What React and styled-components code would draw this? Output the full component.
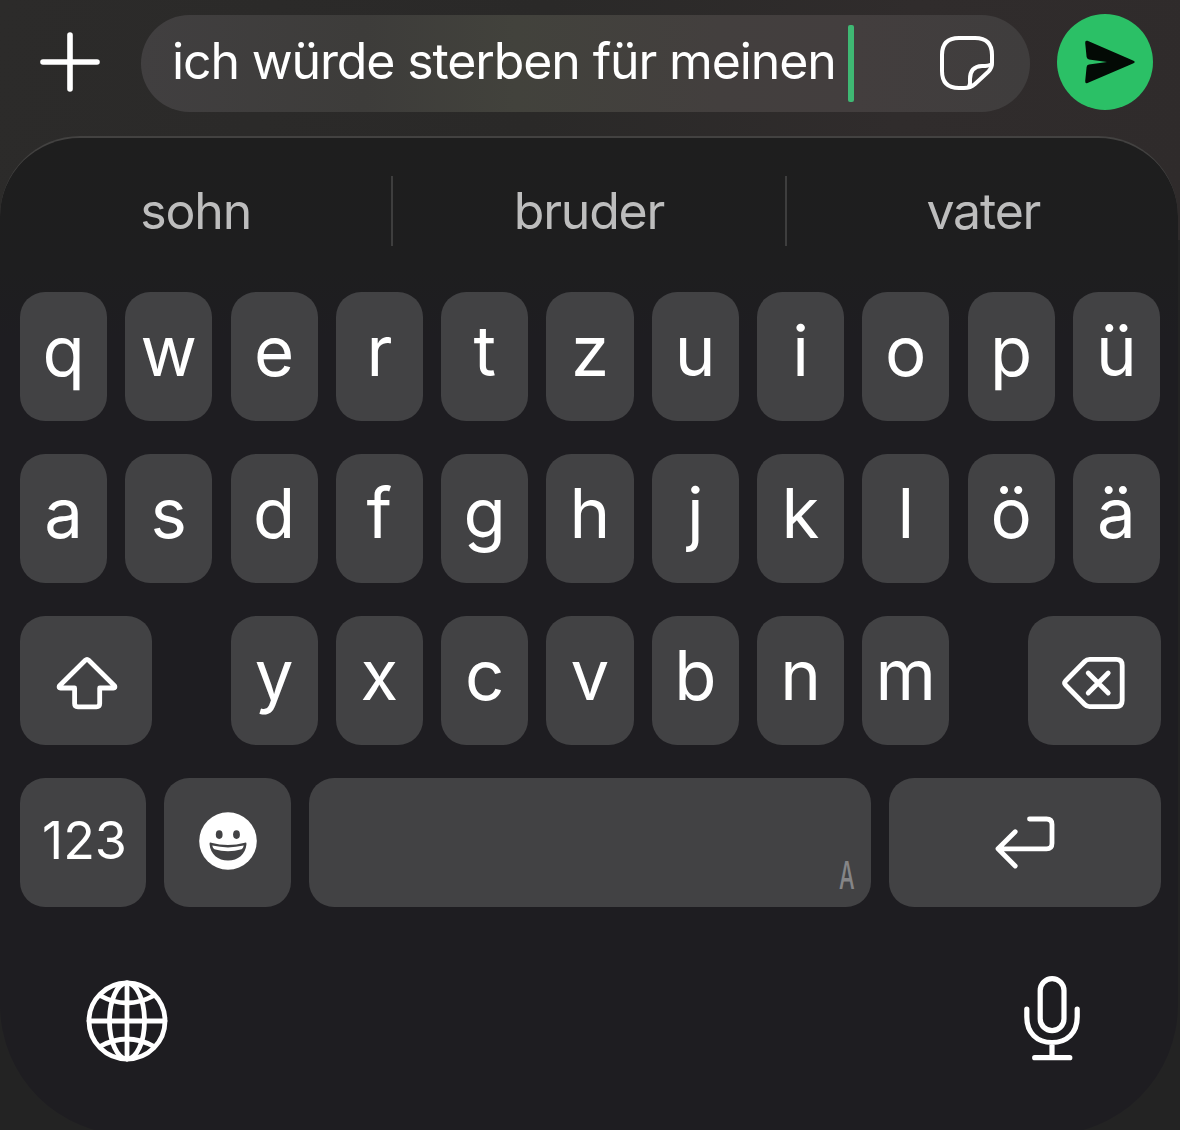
import React from "react";
import styled, { createGlobalStyle } from "styled-components";

const GlobalStyle = createGlobalStyle`
  * {
    box-sizing: border-box;
  }

  body {
    margin: 0;
    background: #262625;
    font-family: Inter, "Liberation Sans", sans-serif;
    color: #fff;
  }

  button {
    padding: 0;
    border: 0;
    font: inherit;
    color: inherit;
  }
`;

const Screen = styled.main`
  display: flex;
  flex-direction: column;
  width: 1180px;
  height: 1130px;
  overflow: hidden;
  background: linear-gradient(100deg, #2c2b2a 0%, #2a2928 45%, #302c2c 75%, #2f2b2b 100%) top / 100% 240px no-repeat
    #232323;
`;

const Composer = styled.header`
  display: flex;
  align-items: center;
  flex: none;
  height: 136px;
  padding: 0 27px 12px 36px;
`;

const IconButton = styled.button`
  display: flex;
  align-items: center;
  justify-content: center;
  flex: none;
  width: ${(props) => props.$size}px;
  height: ${(props) => props.$size}px;
  border-radius: 50%;
  background: ${(props) => props.$color || "transparent"};
`;

const MessageField = styled.div`
  display: flex;
  align-items: center;
  flex: none;
  width: 889px;
  height: 97px;
  margin: 3px 27px 0 37px;
  padding: 0 33px 0 31px;
  border-radius: 49px;
  background: linear-gradient(90deg, #413f40 0%, #3d3c3a 25%, #42423c 42%, #433f3e 65%, #433e3e 80%, #3f3d3d 100%);
`;

const MessageText = styled.span`
  margin-bottom: 5px;
  font-size: 50px;
  line-height: 60px;
  letter-spacing: -1.13px;
  white-space: pre;
`;

const Caret = styled.span`
  width: 6px;
  height: 77px;
  margin-left: 12px;
  border-radius: 2px;
  background: #3fb873;
`;

const StickerButton = styled(IconButton)`
  margin: 0 0 2px auto;
`;

const Panel = styled.section`
  flex: none;
  width: 1178px;
  height: 999px;
  border-top: 2px solid #434241;
  border-radius: 80px 80px 130px 130px;
  background: linear-gradient(#1e1e1e 0, #1e1e1f 130px, #1e1d21 200px, #1e1d21 100%);
`;

const Suggestions = styled.div`
  display: grid;
  grid-template-columns: repeat(3, 1fr);
  align-items: center;
  width: 1180px;
  height: 154px;
  padding-bottom: 8px;
`;

const Suggestion = styled.button`
  height: 70px;
  border-right: ${(props) => (props.$divided ? "2px solid #3e3e3e" : "0")};
  background: none;
  font-size: 50px;
  line-height: 70px;
  letter-spacing: -1.2px;
  color: #bdbdbd;
`;

const Rows = styled.div`
  display: flex;
  flex-direction: column;
  gap: 33px;
  width: 1181px;
  padding: 0 20px;
`;

const Row = styled.div`
  display: flex;
  justify-content: ${(props) => (props.$spread ? "space-between" : "flex-start")};
  gap: 18.2px;
`;

const Key = styled.button`
  display: flex;
  align-items: center;
  justify-content: center;
  flex: none;
  width: ${(props) => props.$width || 87.1}px;
  height: 129px;
  padding-bottom: ${(props) => (props.$letter ? "11px" : "0")};
  border-radius: 25px;
  background: #424244;
  font-size: 69px;
  line-height: 1;
`;

const NumbersKey = styled(Key)`
  padding: 0 0 4px 3px;
  font-size: 52px;
`;

const SpaceKey = styled(Key)`
  align-items: flex-end;
  justify-content: flex-end;
  padding: 0 17px 13px 0;
  color: #858587;
`;

const SpaceHint = styled.span`
  width: 15px;
  font-size: 38px;
  font-weight: 500;
  line-height: 38px;
  transform: scaleX(0.58);
  transform-origin: left;
`;

const BottomBar = styled.footer`
  display: flex;
  justify-content: space-between;
  width: 1180px;
  padding: 69px 83px 0 82px;
`;

const Line = styled.svg`
  display: block;
  flex: none;
  fill: none;
  stroke: #fff;
  stroke-width: ${(props) => props.$weight || 4.8};
  stroke-linecap: round;
  stroke-linejoin: round;
`;

const Solid = styled.svg`
  display: block;
  flex: none;
`;

function PlusIcon() {
  return (
    <Line $weight={5.6} width="68" height="68" viewBox="-34 -34 68 68">
      <path d="M-27 0H27M0-27V27" />
    </Line>
  );
}

function StickerIcon() {
  return (
    <Line $weight={4} width="60" height="60" viewBox="0 0 60 60">
      <path d="M27 55H22Q5 55 5 38V22Q5 5 22 5H38Q55 5 55 22V30Q55 35 51.5 38.5L38 51Q33.5 55 27 55Z" />
      <path d="M32 54Q33.5 51 33 46Q33 33.5 45 33Q52 33 54.5 31.5" />
    </Line>
  );
}

function SendIcon() {
  return (
    <Solid width="96" height="96" viewBox="0 0 96 96">
      <path
        d="M30.5 26.8L76 46.5Q79.5 48 76 49.5L30.5 69Q28 69.8 28.2 67L29.6 53Q29.8 51 32 50.6L50 48L32 45.4Q29.8 45 29.6 43L28.2 29Q28 26 30.5 26.8Z"
        fill="#030a05"
      />
    </Solid>
  );
}

function ShiftIcon() {
  return (
    <Line width="68" height="68" viewBox="-34 -34 68 68">
      <path d="M-.7-20.7Q1-22.3 2.7-20.7L28.7 5Q29.5 7 27.5 7H13.7V22.5Q13.7 25.8 10.4 25.8H-8.1Q-11.4 25.8-11.4 22.5V7H-25.5Q-27.5 7-26.7 5Z" />
    </Line>
  );
}

function BackspaceIcon() {
  return (
    <Line width="68" height="68" viewBox="-34 -34 68 68">
      <path d="M-29.5 0L-10.3-19.5Q-8.3-21.6-5.3-21.6H21.2Q27.2-21.6 27.2-15.6V19.6Q27.2 25.6 21.2 25.6H-5.3Q-8.3 25.6-10.3 23.5L-29.5 4Q-31.3 2-29.5 0Z" />
      <path d="M-6.8-8L13.2 12M13.2-8L-6.8 12" />
    </Line>
  );
}

function ReturnIcon() {
  return (
    <Line width="68" height="68" viewBox="-34 -34 68 68">
      <path d="M4.5-24H21.5Q27-24 27-18.5V.3Q27 5.8 21.5 5.8H-26.8M-9.8-11.3L-27 5.8L-9.8 23" />
    </Line>
  );
}

function EmojiIcon() {
  return (
    <Solid width="68" height="68" viewBox="-34 -34 68 68">
      <circle cy="-2" r="28.8" fill="#fff" />
      <g fill="#424244">
        <ellipse cx="-8.8" cy="-8.4" rx="3.4" ry="4.3" />
        <ellipse cx="8.5" cy="-8.4" rx="3.4" ry="4.3" />
        <path d="M-18.5 1Q-18.6-.8-16.8-.3Q0 4.5 16.8-.3Q18.6-.8 18.5 1C17.5 11.5 10 17.6 0 17.6S-17.5 11.5-18.5 1Z" />
      </g>
      <path d="M-15.8 2.6Q0 6.2 15.8 2.6Q15.4 4.8 13.6 6.2Q0 10.5-13.6 6.2Q-15.4 4.8-15.8 2.6Z" fill="#fff" />
    </Solid>
  );
}

function GlobeIcon() {
  return (
    <Line $weight={4.8} width="90" height="90" viewBox="-45 -45 90 90">
      <circle r="38" />
      <ellipse rx="17.5" ry="38" />
      <path d="M-38 0H38M0-38V38" />
      <path d="M-27-25.5Q0-10.5 27-25.5M-27 25.5Q0 10.5 27 25.5" />
    </Line>
  );
}

function MicIcon() {
  return (
    <Line $weight={5.2} width="90" height="90" viewBox="-45 -45 90 90">
      <rect x="-11.8" y="-42.4" width="23.8" height="52" rx="11.9" />
      <path d="M-25.2-12V-4C-25.2 12-15 21.5 0 21.5S25.2 12 25.2-4V-12M0 21.5V36.7M-17.3 36.7H17.8" />
    </Line>
  );
}

const suggestions = ["sohn", "bruder", "vater"];
const letterRows = ["qwertzuiopü", "asdfghjklöä"];

function LetterKeys({ letters }) {
  return [...letters].map((letter) => (
    <Key key={letter} $letter>
      {letter}
    </Key>
  ));
}

const LetterGroup = styled.div`
  display: flex;
  gap: 18.2px;
`;

export default function App() {
  return (
    <Screen>
      <GlobalStyle />
      <Composer>
        <IconButton $size={68} aria-label="Anhang">
          <PlusIcon />
        </IconButton>
        <MessageField>
          <MessageText>ich würde sterben für meinen</MessageText>
          <Caret />
          <StickerButton $size={60} aria-label="Sticker">
            <StickerIcon />
          </StickerButton>
        </MessageField>
        <IconButton $size={96} $color="#2bc066" aria-label="Senden">
          <SendIcon />
        </IconButton>
      </Composer>
      <Panel>
        <Suggestions>
          {suggestions.map((word, index) => (
            <Suggestion key={word} $divided={index < suggestions.length - 1}>
              {word}
            </Suggestion>
          ))}
        </Suggestions>
        <Rows>
          {letterRows.map((letters) => (
            <Row key={letters}>
              <LetterKeys letters={letters} />
            </Row>
          ))}
          <Row $spread>
            <Key $width={132} aria-label="Umschalt">
              <ShiftIcon />
            </Key>
            <LetterGroup>
              <LetterKeys letters="yxcvbnm" />
            </LetterGroup>
            <Key $width={133} aria-label="Löschen">
              <BackspaceIcon />
            </Key>
          </Row>
          <Row>
            <NumbersKey $width={126}>123</NumbersKey>
            <Key $width={126.8} aria-label="Emoji">
              <EmojiIcon />
            </Key>
            <SpaceKey $width={561.6}>
              <SpaceHint>A</SpaceHint>
            </SpaceKey>
            <Key $width={272} aria-label="Eingabe">
              <ReturnIcon />
            </Key>
          </Row>
        </Rows>
        <BottomBar>
          <IconButton $size={90} aria-label="Sprache">
            <GlobeIcon />
          </IconButton>
          <IconButton $size={90} aria-label="Diktieren">
            <MicIcon />
          </IconButton>
        </BottomBar>
      </Panel>
    </Screen>
  );
}
